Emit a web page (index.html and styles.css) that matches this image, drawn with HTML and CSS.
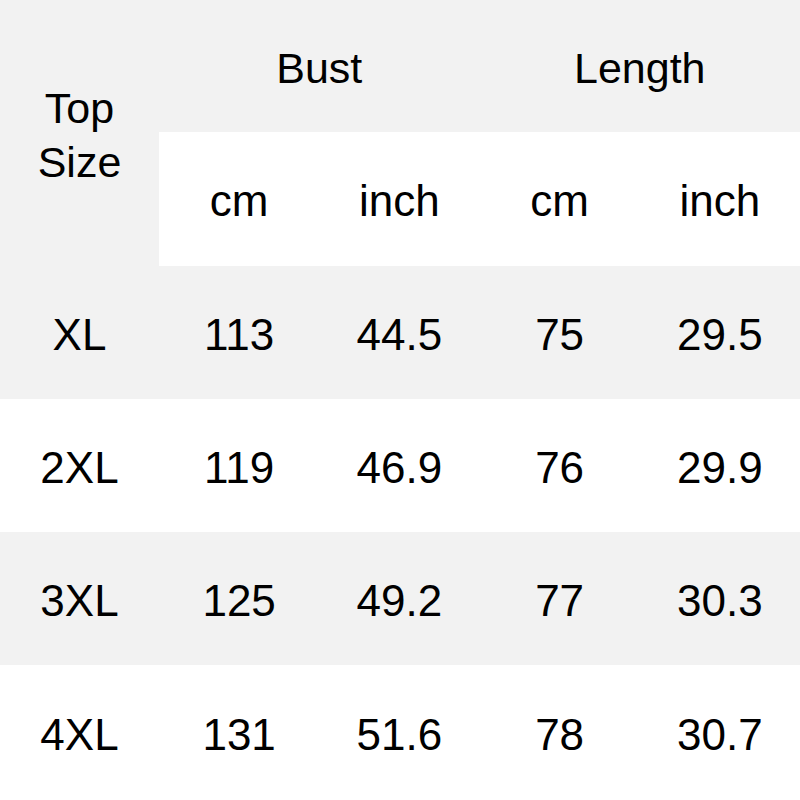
FILE: index.html
```html
<!DOCTYPE html>
<html>
<head>
<meta charset="utf-8">
<link rel="stylesheet" href="styles.css">
</head>
<body>
<div class="chart">
  <div class="cell gray size-head"><span>Top<br>Size</span></div>
  <div class="cell gray span2">Bust</div>
  <div class="cell gray span2">Length</div>
  <div class="cell white">cm</div>
  <div class="cell white">inch</div>
  <div class="cell white">cm</div>
  <div class="cell white">inch</div>

  <div class="cell gray">XL</div>
  <div class="cell gray">113</div>
  <div class="cell gray">44.5</div>
  <div class="cell gray">75</div>
  <div class="cell gray">29.5</div>

  <div class="cell white">2XL</div>
  <div class="cell white">119</div>
  <div class="cell white">46.9</div>
  <div class="cell white">76</div>
  <div class="cell white">29.9</div>

  <div class="cell gray">3XL</div>
  <div class="cell gray">125</div>
  <div class="cell gray">49.2</div>
  <div class="cell gray">77</div>
  <div class="cell gray">30.3</div>

  <div class="cell white">4XL</div>
  <div class="cell white">131</div>
  <div class="cell white">51.6</div>
  <div class="cell white">78</div>
  <div class="cell white">30.7</div>
</div>
</body>
</html>
```

FILE: styles.css
```css
html, body {
  margin: 0;
  padding: 0;
  background: #ffffff;
}
.chart {
  width: 800px;
  height: 800px;
  display: grid;
  grid-template-columns: 159px repeat(4, 1fr);
  grid-template-rows: 132px 134px 133px 133px 133px 135px;
  font-family: "Liberation Sans", Arial, sans-serif;
  font-size: 44px;
  color: #000;
}
.cell {
  display: flex;
  align-items: center;
  justify-content: center;
  text-align: center;
  line-height: 1;
  padding-top: 4px;
  box-sizing: border-box;
}
.gray { background: #f2f2f2; }
.white { background: #ffffff; }
.size-head {
  grid-row: span 2;
  font-size: 43px;
  line-height: 54px;
}
.size-head span { display: block; }
.span2 {
  grid-column: span 2;
  font-size: 43px;
}
```
